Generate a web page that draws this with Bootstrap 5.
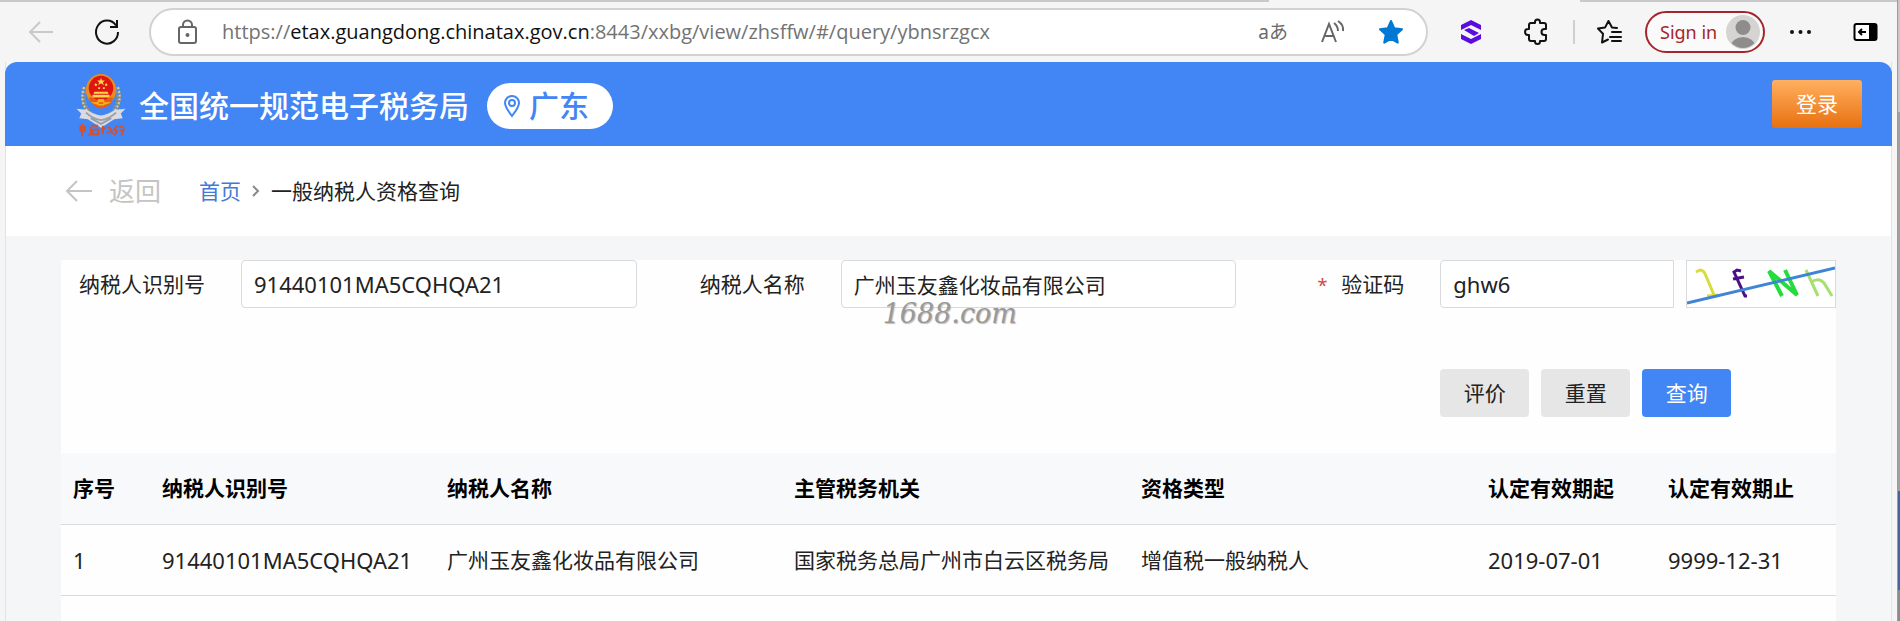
<!DOCTYPE html>
<html lang="zh-CN">
<head>
<meta charset="utf-8">
<meta name="viewport" content="width=device-width, initial-scale=1">
<title>一般纳税人资格查询</title>
<link href="https://cdn.jsdelivr.net/npm/bootstrap@5.3.0/dist/css/bootstrap.min.css" rel="stylesheet">
<style>
  :root { --brand: #4285f4; --edge: #d9dadc; }
  body { font-family: "Noto Sans", "Noto Sans CJK SC", sans-serif; font-size: 21px; line-height: 32px; color: #222; background: #f5f5f5; }
  svg { display: block; flex-shrink: 0; }

  .window-body { min-width: 0; }
  .window-edge { width: 3px; border-left: 1px solid #9c9c9e; background: linear-gradient(#cbc6cc 0 18%, #a3a0a3 18% 79%, #45639a 79% 95%, #8a8a8c 95%); }
  .tab-line { height: 2px; background: #c9c9c9; }
  .tab-line.before { flex: 4 1 0; }
  .tab-line.after { flex: 1 1 0; }
  .tab-gap { flex: 0 0 311px; }

  .toolbar { height: 60px; padding: 0 19px 0 27px; }
  .tool { border: 0; padding: 0; background: none; line-height: 1; flex-shrink: 0; }
  .refresh { margin: 0 28px 0 38px; }
  .spaced { margin-left: 40px; }
  .address { height: 48px; border: 2px solid #d2d2d2; border-radius: 24px; background: #fff; padding: 0 22px 0 24px; margin-right: 31px; min-width: 0; }
  .address .url { font-family: "Open Sans", sans-serif; font-size: 20px; color: #737373; margin-left: 23px; overflow: hidden; white-space: nowrap; }
  .address b { font-weight: 400; color: #111; }
  .translate { font-size: 19px; color: #6a6a6a; }
  .bar-split { width: 2px; height: 24px; background: #cfcfcf; margin: 0 21px 0 24px; }
  .sign-in { width: 120px; height: 42px; border: 2px solid #a4262c; border-radius: 21px; background: #fafafa; color: #a4262c; font-size: 18px; line-height: 24px; padding: 0 3px 0 13px; margin: 0 23px; }

  .portal { margin: 0 5px; border: solid #e2e3e6; border-width: 0 1px; background: #f5f6f8; }
  .site-head { height: 84px; margin: 0 -1px; border-radius: 12px 12px 0 0; background: var(--brand); padding: 0 30px 0 70px; }
  .brand-row { padding-top: 4px; }
  .site-name { font-size: 30px; font-weight: 500; line-height: 44px; color: #fff; margin: 0 18px 0 12px; white-space: nowrap; }
  .region { width: 126px; height: 46px; border: 0; border-radius: 23px; background: #fff; color: var(--brand); font-size: 30px; font-weight: 500; line-height: 44px; padding: 0 0 0 16px; }
  .btn-login { width: 90px; height: 48px; border: 0; border-radius: 3px; color: #fff; padding: 0; background: linear-gradient(#ffb060, #e8700f); }

  .crumbs { height: 90px; background: #fff; padding: 0 59px; }
  .back { font-size: 26px; color: #c4c4c4; text-decoration: none; margin-right: 38px; }
  .home-link { color: #4379d6; text-decoration: none; }

  .panel { margin: 24px 55px 0; background: #fefefe; min-height: calc(100vh - 260px); }
  .query { display: grid; grid-template-columns: 180px 1fr 204px 1fr 204px 1fr; row-gap: 60px; padding-bottom: 36px; }
  .query label { padding-right: 36px; text-align: right; line-height: 48px; white-space: nowrap; }
  .query .form-control { height: 48px; border: 1px solid var(--edge); border-radius: 4px; padding: 0 12px; font-size: 21px; color: #222; background: #fff; }
  .query .form-control.latin, .latin { font-size: 22px; }
  .need { color: #d0474b; font-size: 18px; margin-right: 14px; }
  .captcha { width: 150px; height: 48px; border: 1px solid var(--edge); background: #fff; }
  .act { width: 89px; height: 48px; border: 0; border-radius: 4px; padding: 0; background: #e6e6e6; color: #222; }
  .act.go { background: var(--brand); color: #fff; }
  .actions { grid-column: 6; }
  .gap-12 { gap: 12px; }
  .stamp { position: absolute; left: 42px; top: 38px; font: italic 400 27px/32px "DejaVu Serif", serif; color: #999; text-shadow: 1px 1px 1px #bdbdbd; pointer-events: none; }

  .result { table-layout: fixed; margin: 0; }
  .result th, .result td { height: 71px; padding: 0 12px; vertical-align: middle; background: transparent; color: #222; border-bottom: 1px solid var(--edge); white-space: nowrap; }
  .result th { background: #f8f9fb; color: #000; font-weight: 700; }
  .c-no { width: 89px; }
  .c-id { width: 285px; }
  .c-date { width: 180px; }
</style>
</head>
<body>
<div class="d-flex min-vh-100">
  <div class="window-body flex-grow-1">
    <div class="d-flex">
      <div class="tab-line before"></div><div class="tab-gap"></div><div class="tab-line after"></div>
    </div>

    <div class="toolbar d-flex align-items-center">
      <button class="tool" aria-label="Back"><svg width="28" height="28" viewBox="0 0 28 28" fill="none" stroke="#c9c9c9" stroke-width="2"><path d="M26 14H3M13 4L3 14l10 10"/></svg></button>
      <button class="tool refresh" aria-label="Refresh"><svg width="28" height="28" viewBox="0 0 28 28" fill="none" stroke="#111" stroke-width="2"><path d="M23 7.500A11 11.500 0 1 0 25 14M24 2v7h-7"/></svg></button>
      <div class="address d-flex align-items-center flex-grow-1">
        <svg width="24" height="28" viewBox="0 0 24 28" fill="none" stroke="#666" stroke-width="2"><rect x="4" y="9" width="17" height="16" rx="2"/><path d="M8 9V7a4.500 4.500 0 0 1 9 0v2"/><circle cx="12.500" cy="17" r="1" fill="#555"/></svg>
        <span class="url flex-grow-1">https://<b>etax.guangdong.chinatax.gov.cn</b>:8443/xxbg/view/zhsffw/#/query/ybnsrzgcx</span>
        <button class="tool translate" aria-label="Translate">aあ</button>
        <button class="tool ms-4 me-4 px-2" aria-label="Read aloud"><svg width="26" height="28" viewBox="0 0 26 28" fill="none" stroke="#666" stroke-width="2"><path d="M2 24L9 6L16 24M5 18h8M14 5q4 3 4 8M18 3q6 4 5 10"/></svg></button>
        <button class="tool" aria-label="Favourite"><svg width="26" height="26" viewBox="0 0 26 26" fill="#0078d4" stroke="#0078d4" stroke-width="2" stroke-linejoin="round"><path d="M13 2l3.300 7.300 7.700.9-5.700 5.400 1.500 8L13 19.800 6.200 23.600l1.500-8L2 10.200l7.700-.9z"/></svg></button>
      </div>
      <button class="tool" aria-label="Extension"><svg width="24" height="26" viewBox="0 0 24 26" fill="#5a0be0"><path d="M12 1l10 5v5l-10-5-10 5V6z"/><path d="M12 25L2 20v-5l10 5 10-5v5z"/><path d="M5 11l5-2 10 5-5 3z"/></svg></button>
      <button class="tool spaced" aria-label="Extensions"><svg width="26" height="28" viewBox="0 0 26 28" fill="none" stroke="#111" stroke-width="2" stroke-linejoin="round"><path d="M8 5h4V4a2.500 2.500 0 0 1 5 0v1h4q2 0 2 2v4h-1.500a3 3 0 0 0 0 6H23v4q0 2-2 2h-4v.500a2.500 2.500 0 0 1-5 0V23H8q-2 0-2-2v-4H5a3 3 0 0 1 0-6h1V7q0-2 2-2z"/></svg></button>
      <div class="bar-split"></div>
      <button class="tool" aria-label="Favourites"><svg width="26" height="26" viewBox="0 0 26 26" fill="none" stroke="#111" stroke-width="2" stroke-linejoin="round" stroke-linecap="round"><path d="M21 9l-5-.6L12.500 2 9 8.600l-7 1 5 5.200L6 23.500l6-3M16 13h9M14 18h11M16 22h9"/></svg></button>
      <button class="sign-in d-flex align-items-center justify-content-between flex-shrink-0">Sign in
        <svg width="34" height="34" viewBox="0 0 34 34"><defs><clipPath id="face"><circle cx="17" cy="17" r="16"/></clipPath></defs><circle cx="17" cy="17" r="17" fill="#d6d4d2"/><g fill="#8f8d8b" clip-path="url(#face)"><circle cx="17" cy="12.500" r="7.500"/><ellipse cx="17" cy="31" rx="12" ry="9"/></g></svg>
      </button>
      <button class="tool" aria-label="Settings"><svg width="25" height="8" viewBox="0 0 25 8" fill="#111"><circle cx="4" cy="4" r="2"/><circle cx="12.500" cy="4" r="2"/><circle cx="21" cy="4" r="2"/></svg></button>
      <button class="tool spaced" aria-label="Sidebar"><svg width="25" height="20" viewBox="0 0 25 20"><rect x="1.500" y="2" width="22" height="16" rx="2" fill="#fff" stroke="#000" stroke-width="2"/><path d="M16 2h8v16h-8z"/><path d="M13 10H6M9 7l-3 3 3 3" fill="none" stroke="#000" stroke-width="2"/></svg></button>
    </div>

    <div class="portal">
      <header class="site-head d-flex align-items-center">
        <div class="brand-row d-flex align-items-center">
          <svg width="52" height="66" viewBox="0 0 54 70" role="img" aria-label="中国税务">
            <g fill="none" stroke="#8f917f" stroke-width="5" stroke-dasharray="3 1"><path d="M10 15Q3 37 23 48"/><path d="M44 15q7 22-13 33"/></g>
            <g fill="none" stroke="#d4d2b4" stroke-width="2" stroke-dasharray="2 2"><path d="M9 15Q2 36 22 48"/><path d="M45 15q7 21-13 33"/></g>
            <path d="M1 38l11 1q7 5 15 6 8-1 15-6l11-1-5 5 2 5-9 1-14 9-14-9-9-1 2-5z" fill="#d9dbe0"/>
            <path d="M11 42q8 7 16 8 8-1 16-8M16 48l11 6 11-6" fill="none" stroke="#9a9eaa" stroke-width="2"/>
            <ellipse cx="27" cy="18" rx="16" ry="17" fill="#ef8a1d"/>
            <path d="M14 26h26q-3 10-13 12-10-2-13-12z" fill="#e85c14"/>
            <circle cx="27" cy="16" r="13" fill="#de1512"/>
            <path d="M27 5l1 3h3l-2 2 1 3-3-2-3 2 1-3-2-2h3zM21 11l2 1-1 2-2-1zM33 11l-2 1 1 2 2-1zM24 15h2v2h-2zM29 15h2v2h-2zM20 20h14l1 2H19zM18 23h18v3H18z" fill="#ffd84a"/>
            <path d="M17 31q10 5 20 0M24 28h6v6h-6z" fill="#f5b321" stroke="#f5b321"/>
            <g fill="none" stroke="#d4502f" stroke-width="2"><path d="M5 57h5v4H5zM7 54v13M17 56h7M16 57v7l-2 3M18 60h6v5h-6zM29 56v9M27 60l5-2M34 57l4 3M33 64l5-3 1 4M44 56l-3 4 3 2-3 4M46 57h5M47 61l4-1-2 6"/></g>
          </svg>
          <span class="site-name">全国统一规范电子税务局</span>
          <button class="region d-flex align-items-center flex-shrink-0">
            <svg class="me-2" width="18" height="24" viewBox="0 0 18 24" fill="none" stroke="#4285f4" stroke-width="2"><path d="M9 22Q2 13 2 9a7 7 0 0 1 14 0q0 4-7 13z"/><circle cx="9" cy="9" r="3"/></svg>广东
          </button>
        </div>
        <button class="btn-login ms-auto flex-shrink-0">登录</button>
      </header>

      <nav class="crumbs d-flex align-items-center" aria-label="breadcrumb">
        <a class="back d-flex align-items-center" href="#"><svg width="28" height="24" viewBox="0 0 28 24" fill="none" stroke="#c4c4c4" stroke-width="2"><path d="M27 12H2M12 2L2 12l10 10"/></svg><span class="ms-3">返回</span></a>
        <a class="home-link" href="#">首页</a>
        <svg class="mx-2" width="14" height="14" viewBox="0 0 14 14" fill="none" stroke="#8a8a8a" stroke-width="2"><path d="M4 2l5 5-5 5"/></svg>
        <span>一般纳税人资格查询</span>
      </nav>

      <main class="panel">
        <form class="query">
          <label for="tax-id">纳税人识别号</label>
          <div><input id="tax-id" class="form-control latin" value="91440101MA5CQHQA21"></div>
          <label for="tax-name">纳税人名称</label>
          <div class="position-relative"><input id="tax-name" class="form-control" value="广州玉友鑫化妆品有限公司"><span class="stamp">1688.com</span></div>
          <label for="code"><span class="need">*</span>验证码</label>
          <div class="d-flex gap-12">
            <input id="code" class="form-control latin rounded-end-0" value="ghw6">
            <svg class="captcha" viewBox="0 0 148 46" fill="none" role="img" aria-label="验证码">
              <path d="M9 11l4-2q4 0 6 6l8 19M20 35l11-1" stroke="#d9dc3a" stroke-width="3"/>
              <path d="M54 10l-4-1-3 2 11 24 2 0M46 18l11-2" stroke="#4b1085" stroke-width="3"/>
              <path d="M95 35L82 10l28 24L98 9" stroke="#22dd3a" stroke-width="4"/>
              <path d="M119 9l12 26M124 21q8-5 13 1l8 13" stroke="#a5e070" stroke-width="3"/>
              <path d="M0 42L148 7" stroke="#3f85d6" stroke-width="3"/>
            </svg>
          </div>
          <div class="actions d-flex gap-12">
            <button type="button" class="act">评价</button>
            <button type="reset" class="act">重置</button>
            <button type="button" class="act go">查询</button>
          </div>
        </form>

        <table class="table result">
          <thead>
            <tr><th class="c-no">序号</th><th class="c-id">纳税人识别号</th><th>纳税人名称</th><th>主管税务机关</th><th>资格类型</th><th class="c-date">认定有效期起</th><th class="c-date">认定有效期止</th></tr>
          </thead>
          <tbody>
            <tr><td class="latin">1</td><td class="latin">91440101MA5CQHQA21</td><td>广州玉友鑫化妆品有限公司</td><td>国家税务总局广州市白云区税务局</td><td>增值税一般纳税人</td><td class="latin">2019-07-01</td><td class="latin">9999-12-31</td></tr>
          </tbody>
        </table>
      </main>
    </div>
  </div>
  <div class="window-edge flex-shrink-0"></div>
</div>
<script src="https://cdn.jsdelivr.net/npm/bootstrap@5.3.0/dist/js/bootstrap.bundle.min.js"></script>
</body>
</html>
